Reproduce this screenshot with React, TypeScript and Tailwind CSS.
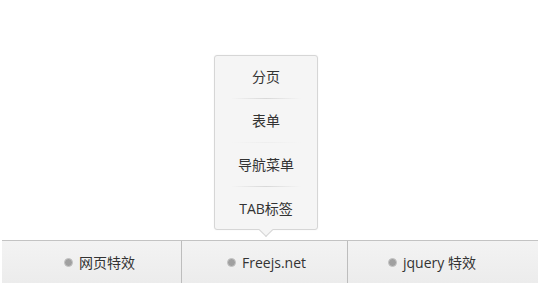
import { Fragment } from "react";

const menuItems = ["分页", "表单", "导航菜单", "TAB标签"];

const tabs = [
    { label: "网页特效", width: "w-[180px]", pad: "pl-[62px]" },
    { label: "Freejs.net", width: "w-[166px]", pad: "pl-[45px]" },
    { label: "jquery 特效", width: "w-[189px]", pad: "pl-[40px]" },
];

function Dot() {
    return <span className="inline-block w-[9px] h-[9px] rounded-full bg-[#a0a0a0] border border-[#c4c4c4] mr-[6px]" />;
}

export default function App() {
    return (
        <div
            className="w-[540px] h-[300px] bg-white text-[#333] text-[14px] pt-[240px] px-[2px]"
            style={{ fontFamily: '"Open Sans", "Noto Sans CJK SC", sans-serif' }}
        >
            <div className="relative flex h-[43px] border-t border-[#c3c3c3] bg-gradient-to-b from-[#f3f3f3] to-[#ececec]">
                {tabs.map((tab, i) => (
                    <div
                        key={tab.label}
                        className={`${tab.width} ${tab.pad} h-full flex items-center ${i < tabs.length - 1 ? "border-r border-[#bdbdbd]" : ""}`}
                    >
                        <Dot />
                        <span>{tab.label}</span>
                    </div>
                ))}

                <div className="absolute left-[212px] bottom-[53px] w-[104px] h-[175px] bg-[#f5f5f5] border border-[#d6d6d6] rounded-[3px] shadow-[0_0_2px_rgba(0,0,0,0.06)] flex flex-col items-center pt-[4px]">
                    {menuItems.map((item, i) => (
                        <Fragment key={item}>
                            <div className="h-[33px] flex items-center justify-center">{item}</div>
                            {i < menuItems.length - 1 && (
                                <div
                                    className={`w-[70px] h-px my-[5px] bg-gradient-to-r from-transparent to-transparent ${i === 1 ? "via-[#eeeeee]" : "via-[#d8d8d8]"}`}
                                />
                            )}
                        </Fragment>
                    ))}
                    <span className="absolute -bottom-[6px] left-[46px] w-[10px] h-[10px] rotate-45 bg-[#f5f5f5] border-r border-b border-[#d6d6d6]" />
                </div>
            </div>
        </div>
    );
}
